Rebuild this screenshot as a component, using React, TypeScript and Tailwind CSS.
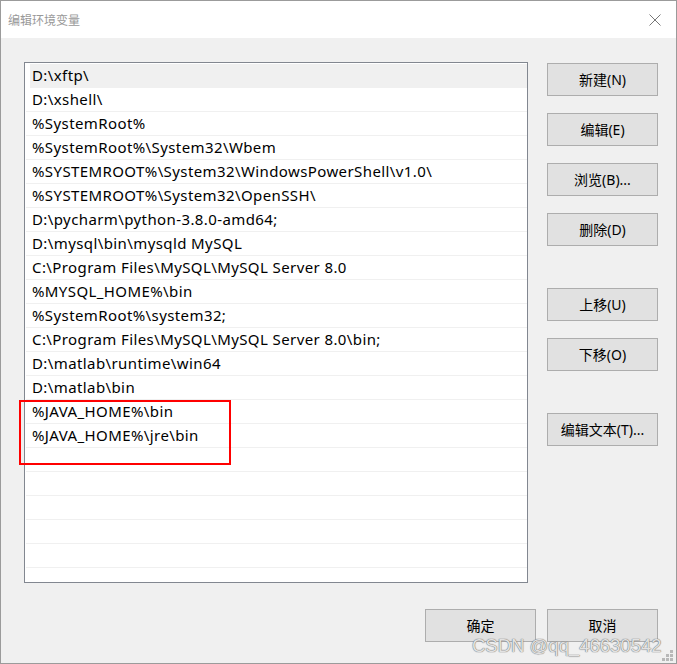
import React from 'react'

const paths = [
  'D:\\xftp\\',
  'D:\\xshell\\',
  '%SystemRoot%',
  '%SystemRoot%\\System32\\Wbem',
  '%SYSTEMROOT%\\System32\\WindowsPowerShell\\v1.0\\',
  '%SYSTEMROOT%\\System32\\OpenSSH\\',
  'D:\\pycharm\\python-3.8.0-amd64;',
  'D:\\mysql\\bin\\mysqld MySQL',
  'C:\\Program Files\\MySQL\\MySQL Server 8.0',
  '%MYSQL_HOME%\\bin',
  '%SystemRoot%\\system32;',
  'C:\\Program Files\\MySQL\\MySQL Server 8.0\\bin;',
  'D:\\matlab\\runtime\\win64',
  'D:\\matlab\\bin',
  '%JAVA_HOME%\\bin',
  '%JAVA_HOME%\\jre\\bin',
  '',
  '',
  '',
  '',
  '',
  '',
]

function Btn({ label, className = '' }: { label: string; className?: string }) {
  return (
    <button
      className={`w-[111px] h-[33px] bg-[#e1e1e1] border border-[#adadad] text-[14px] text-black flex items-center justify-center ${className}`}
    >
      {label}
    </button>
  )
}

export default function App() {
  return (
    <div
      className="relative w-[677px] h-[664px] bg-[#f0f0f0] border border-[#9b9b9b] overflow-hidden flex flex-col"
      style={{ fontFamily: '"Noto Sans", "Noto Sans CJK SC", sans-serif' }}
    >
      {/* title bar */}
      <div className="h-[37px] bg-white flex items-center justify-between pl-[7px] pr-[15px] shrink-0">
        <span
          className="text-[12px] text-[#999999]"
          style={{ fontFamily: '"Noto Sans CJK SC", sans-serif' }}
        >
          编辑环境变量
        </span>
        <svg width="12" height="12" viewBox="0 0 12 12">
          <path d="M0.5 0.5 L11.5 11.5 M11.5 0.5 L0.5 11.5" stroke="#777" strokeWidth="1" />
        </svg>
      </div>

      <div className="flex pl-[23px] mt-[24px]">
        {/* path list */}
        <div className="w-[504px] h-[521px] bg-white border border-[#828790] overflow-hidden pt-[1px] pl-[1px]">
          {paths.map((p, i) => (
            <div
              key={i}
              className={`h-[24px] border-b border-[#f0f0f0] flex items-center text-[15px] tracking-[0.4px] text-black whitespace-nowrap ${
                i === 0 ? 'bg-[#f0f0f0] ml-[4px] pl-[2px]' : 'pl-[6px]'
              }`}
            >
              {p}
            </div>
          ))}
        </div>

        {/* side buttons */}
        <div className="ml-[19px] mt-[1px] flex flex-col">
          <Btn label="新建(N)" />
          <Btn label="编辑(E)" className="mt-[17px]" />
          <Btn label="浏览(B)..." className="mt-[17px]" />
          <Btn label="删除(D)" className="mt-[17px]" />
          <Btn label="上移(U)" className="mt-[42px]" />
          <Btn label="下移(O)" className="mt-[17px]" />
          <Btn label="编辑文本(T)..." className="mt-[42px]" />
        </div>
      </div>

      <div className="flex justify-end gap-[11px] pr-[18px] mt-[26px]">
        <Btn label="确定" />
        <Btn label="取消" />
      </div>

      {/* highlight box */}
      <div className="absolute left-[18px] top-[399px] w-[212px] h-[65px] border-2 border-[#ff0000]" />

      {/* watermark */}
      <div
        className="absolute left-[471px] top-[631px] text-[18.5px] text-[#e2e2e2] whitespace-nowrap"
        style={{ fontFamily: '"Liberation Sans", sans-serif', textShadow: '0 0 1px #6f6f6f, 0 0 1px #6f6f6f' }}
      >
        CSDN @qq_46630542
      </div>

      {/* resize grip */}
      <svg className="absolute right-[3px] bottom-[2px]" width="11" height="11" viewBox="0 0 11 11">
        {[
          [8, 0],
          [4, 4],
          [8, 4],
          [0, 8],
          [4, 8],
          [8, 8],
        ].map(([x, y], i) => (
          <rect key={i} x={x} y={y} width="3" height="3" fill="#b8b8b8" />
        ))}
      </svg>
    </div>
  )
}
